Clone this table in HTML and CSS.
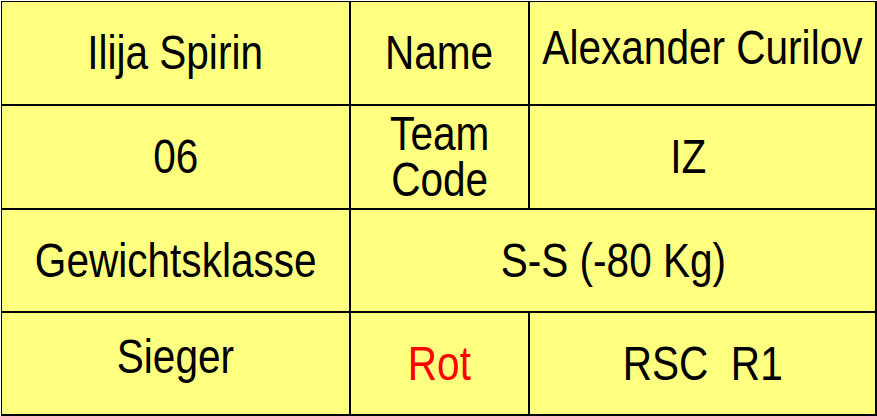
FILE: index.html
```html
<!DOCTYPE html>
<html>
<head>
<meta charset="utf-8">
<link rel="stylesheet" href="styles.css">
</head>
<body>
<div class="sheet">
  <div class="cell"><span class="txt">Ilija Spirin</span></div>
  <div class="cell"><span class="txt">Name</span></div>
  <div class="cell lift5"><span class="txt">Alexander Curilov</span></div>
  <div class="cell"><span class="txt">06</span></div>
  <div class="cell"><span class="txt two">Team<br>Code</span></div>
  <div class="cell shift-left"><span class="txt">IZ</span></div>
  <div class="cell"><span class="txt">Gewichtsklasse</span></div>
  <div class="cell wide"><span class="txt">S-S (-80 Kg)</span></div>
  <div class="cell lift7"><span class="txt">Sieger</span></div>
  <div class="cell red"><span class="txt">Rot</span></div>
  <div class="cell"><span class="txt pre">RSC  R1</span></div>
</div>
</body>
</html>
```
FILE: styles.css
```css
html, body {
  margin: 0;
  padding: 0;
  background: #ffffff;
}
.sheet {
  margin: 1px 0 0 1px;
  width: 876px;
  height: 415px;
  box-sizing: border-box;
  padding: 1px;
  background: #000;
  display: grid;
  grid-template-columns: 347px 177px 345px;
  grid-template-rows: 102px 102px 101px 101px;
  gap: 2px;
}
.cell {
  background: #ffff80;
  display: flex;
  align-items: center;
  justify-content: center;
  text-align: center;
  font-family: "Liberation Sans", Arial, sans-serif;
  font-size: 48px;
  line-height: 1;
  color: #000;
  overflow: visible;
  min-width: 0;
}
.txt {
  display: inline-block;
  white-space: nowrap;
  flex-shrink: 0;
  transform: scaleX(0.845);
  transform-origin: center center;
}
.two {
  line-height: 46px;
}
.pre {
  white-space: pre;
}
.wide {
  grid-column: span 2;
}
.red {
  color: #ff0000;
}
.lift5 {
  padding-bottom: 10px;
}
.lift7 {
  padding-bottom: 14px;
}
.shift-left {
  padding-right: 28px;
}
```
